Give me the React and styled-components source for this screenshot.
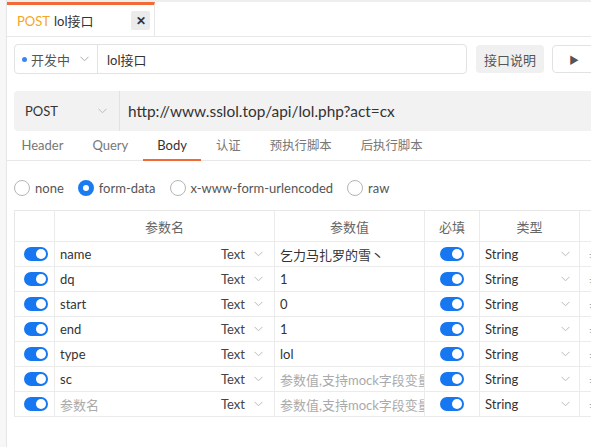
import React from 'react'
import styled, { createGlobalStyle } from 'styled-components'

const GlobalStyle = createGlobalStyle`
  html, body {
    margin: 0;
    padding: 0;
    background: #fff;
    overflow: hidden;
  }
  body {
    font-family: Lato, "Noto Sans CJK SC", sans-serif;
    font-size: 13px;
    color: #333;
  }
`

const Page = styled.div`
  display: flex;
  width: 591px;
  height: 447px;
  overflow: hidden;
`

const Rail = styled.div`
  width: 6px;
  flex-shrink: 0;
  background: #f7f7f7;
  border-right: 1px solid #e6e6e6;
`

const Main = styled.div`
  flex: 1;
  min-width: 0;
  display: flex;
  flex-direction: column;
`

const TabBar = styled.div`
  display: flex;
  height: 34px;
  border-top: 2px solid #eeeeee;
  border-bottom: 1px solid #e8e8e8;
`

const DocTab = styled.div`
  width: 148px;
  box-sizing: border-box;
  border-top: 3px solid #f26b36;
  border-right: 1px solid #e8e8e8;
  display: flex;
  align-items: center;
  padding: 0 4px 0 10px;
  font-size: 13px;
  white-space: nowrap;
`

const Method = styled.span`
  color: #f5a623;
  margin-right: 4px;
`

const Close = styled.span`
  margin-left: auto;
  width: 19px;
  height: 19px;
  background: #ebebeb;
  border-radius: 2px;
  display: flex;
  align-items: center;
  justify-content: center;
  font-size: 12px;
  font-weight: bold;
  color: #333;
`

const HeadRow = styled.div`
  display: flex;
  align-items: center;
  gap: 8px;
  padding: 7px 0 0 7px;
  height: 30px;
`

const NameBox = styled.div`
  width: 453px;
  flex-shrink: 0;
  height: 30px;
  box-sizing: border-box;
  border: 1px solid #e2e2e2;
  border-radius: 4px;
  display: flex;
  align-items: center;
  margin-right: 1px;
`

const Status = styled.div`
  width: 83px;
  height: 100%;
  box-sizing: border-box;
  border-right: 1px solid #e2e2e2;
  display: flex;
  align-items: center;
  padding-left: 7px;
  color: #555;
`

const Dot = styled.span`
  width: 5px;
  height: 5px;
  border-radius: 50%;
  background: #3a86f0;
  margin-right: 4px;
`

const Chevron = styled.svg`
  width: 9px;
  height: 6px;
  margin-left: ${p => p.$gap || 'auto'};
  margin-right: ${p => p.$right || '0'};
  flex-shrink: 0;
`

const NameText = styled.span`
  padding-left: 9px;
  color: #333;
`

const GrayButton = styled.div`
  flex-shrink: 0;
  white-space: nowrap;
  height: 28px;
  padding: 0 8px;
  background: #f0f0f0;
  border-radius: 4px;
  display: flex;
  align-items: center;
  color: #555;
`

const PlayButton = styled.div`
  width: 60px;
  flex-shrink: 0;
  height: 28px;
  box-sizing: border-box;
  border: 1px solid #e2e2e2;
  border-radius: 4px;
  display: flex;
  align-items: center;
  padding-left: 16px;
  color: #555;
  font-size: 10px;
`

const UrlBar = styled.div`
  margin: 17px 0 0 7px;
  height: 40px;
  background: #f2f2f2;
  border-radius: 4px 0 0 4px;
  display: flex;
  align-items: center;
`

const MethodSelect = styled.div`
  width: 106px;
  height: 100%;
  box-sizing: border-box;
  border-right: 1px solid #e2e2e2;
  display: flex;
  align-items: center;
  padding-left: 11px;
  color: #333;
`

const UrlText = styled.span`
  padding-left: 8px;
  font-size: 15.4px;
  color: #333;
  white-space: nowrap;
`

const SubTabs = styled.div`
  display: flex;
  height: 29px;
  border-bottom: 1px solid #e8e8e8;
`

const SubTab = styled.div`
  padding: 0 14.5px;
  display: flex;
  align-items: center;
  color: ${p => (p.$active ? '#333' : '#777')};
  font-size: ${p => (p.$cjk ? '12.4px' : '13px')};
  border-bottom: 2px solid ${p => (p.$active ? '#f26b36' : 'transparent')};
  margin-bottom: -1px;
`

const RadioRow = styled.div`
  display: flex;
  align-items: center;
  height: 45px;
  padding: 4px 0 0 7px;
  color: #555;
`

const RadioItem = styled.label`
  display: flex;
  align-items: center;
  margin-right: 14px;
`

const Circle = styled.span`
  width: 16px;
  height: 16px;
  box-sizing: border-box;
  border-radius: 50%;
  border: ${p => (p.$on ? '5px solid #1a7cf0' : '1px solid #b5b5b5')};
  margin-right: 5px;
`

const Table = styled.div`
  margin: 0 0 0 7px;
  border-top: 1px solid #e8e8e8;
  border-left: 1px solid #e8e8e8;
  width: 620px;
`

const Row = styled.div`
  display: grid;
  grid-template-columns: 40px 220px 150px 55px 100px 1fr;
  height: ${p => (p.$head ? '31px' : '25px')};
  border-bottom: 1px solid #ebebeb;
  box-sizing: border-box;
`

const Cell = styled.div`
  border-right: 1px solid #ebebeb;
  display: flex;
  align-items: center;
  justify-content: ${p => (p.$center ? 'center' : 'flex-start')};
  padding: 0 ${p => (p.$center ? '0' : p.$wide ? '9px' : '5px')};
  color: ${p => (p.$muted ? '#aaa' : p.$head ? '#666' : '#333')};
  white-space: nowrap;
  overflow: hidden;
  min-width: 0;
`

const Grow = styled.span`
  flex: 1;
  overflow: hidden;
  color: ${p => (p.$muted ? '#aaa' : '#333')};
`

const TypeLabel = styled.span`
  color: #444;
`

const Toggle = styled.span`
  width: 24px;
  height: 14px;
  border-radius: 7px;
  background: #1677f0;
  position: relative;
  flex-shrink: 0;
  margin-left: ${p => (p.$left ? '4px' : '0')};
  &::after {
    content: '';
    position: absolute;
    right: 2px;
    top: 2px;
    width: 10px;
    height: 10px;
    border-radius: 50%;
    background: #fff;
  }
`

function Chev({ gap, right, color = '#999' }) {
  return (
    <Chevron $gap={gap} $right={right} viewBox="0 0 9 6">
      <path d="M0.5 0.8 L4.5 4.8 L8.5 0.8" fill="none" stroke={color} strokeWidth="1" />
    </Chevron>
  )
}

const rows = [
  { name: 'name', value: '乞力马扎罗的雪丶' },
  { name: 'dq', value: '1' },
  { name: 'start', value: '0' },
  { name: 'end', value: '1' },
  { name: 'type', value: 'lol' },
  { name: 'sc', value: '' },
  { name: '', value: '' },
]

const tabs = [
  { label: 'Header' },
  { label: 'Query' },
  { label: 'Body', active: true },
  { label: '认证', cjk: true },
  { label: '预执行脚本', cjk: true },
  { label: '后执行脚本', cjk: true },
]

export default function App() {
  return (
    <Page>
      <GlobalStyle />
      <Rail />
      <Main>
        <TabBar>
          <DocTab>
            <Method>POST</Method>lol接口
            <Close>✕</Close>
          </DocTab>
        </TabBar>

        <HeadRow>
          <NameBox>
            <Status>
              <Dot />开发中
              <Chev gap="10px" color="#aaa" />
            </Status>
            <NameText>lol接口</NameText>
          </NameBox>
          <GrayButton>接口说明</GrayButton>
          <PlayButton>▶</PlayButton>
        </HeadRow>

        <UrlBar>
          <MethodSelect>
            POST
            <Chev right="12px" color="#bbb" />
          </MethodSelect>
          <UrlText>http://www.sslol.top/api/lol.php?act=cx</UrlText>
        </UrlBar>

        <SubTabs>
          {tabs.map(t => (
            <SubTab key={t.label} $active={t.active} $cjk={t.cjk}>{t.label}</SubTab>
          ))}
        </SubTabs>

        <RadioRow>
          {['none', 'form-data', 'x-www-form-urlencoded', 'raw'].map(r => (
            <RadioItem key={r}>
              <Circle $on={r === 'form-data'} />
              {r}
            </RadioItem>
          ))}
        </RadioRow>

        <Table>
          <Row $head>
            <Cell $head />
            <Cell $head $center>参数名</Cell>
            <Cell $head $center>参数值</Cell>
            <Cell $head $center>必填</Cell>
            <Cell $head $center>类型</Cell>
            <Cell $head />
          </Row>
          {rows.map((r, i) => (
            <Row key={i}>
              <Cell><Toggle $left /></Cell>
              <Cell>
                <Grow $muted={!r.name}>{r.name || '参数名'}</Grow>
                <TypeLabel>Text</TypeLabel>
                <Chev gap="9px" right="6px" color="#bbb" />
              </Cell>
              <Cell $muted={!r.value}>{r.value || '参数值,支持mock字段变量'}</Cell>
              <Cell $center><Toggle /></Cell>
              <Cell>
                <Grow>String</Grow>
                <Chev right="4px" color="#bbb" />
              </Cell>
              <Cell $muted $wide>参数描述</Cell>
            </Row>
          ))}
        </Table>
      </Main>
    </Page>
  )
}
